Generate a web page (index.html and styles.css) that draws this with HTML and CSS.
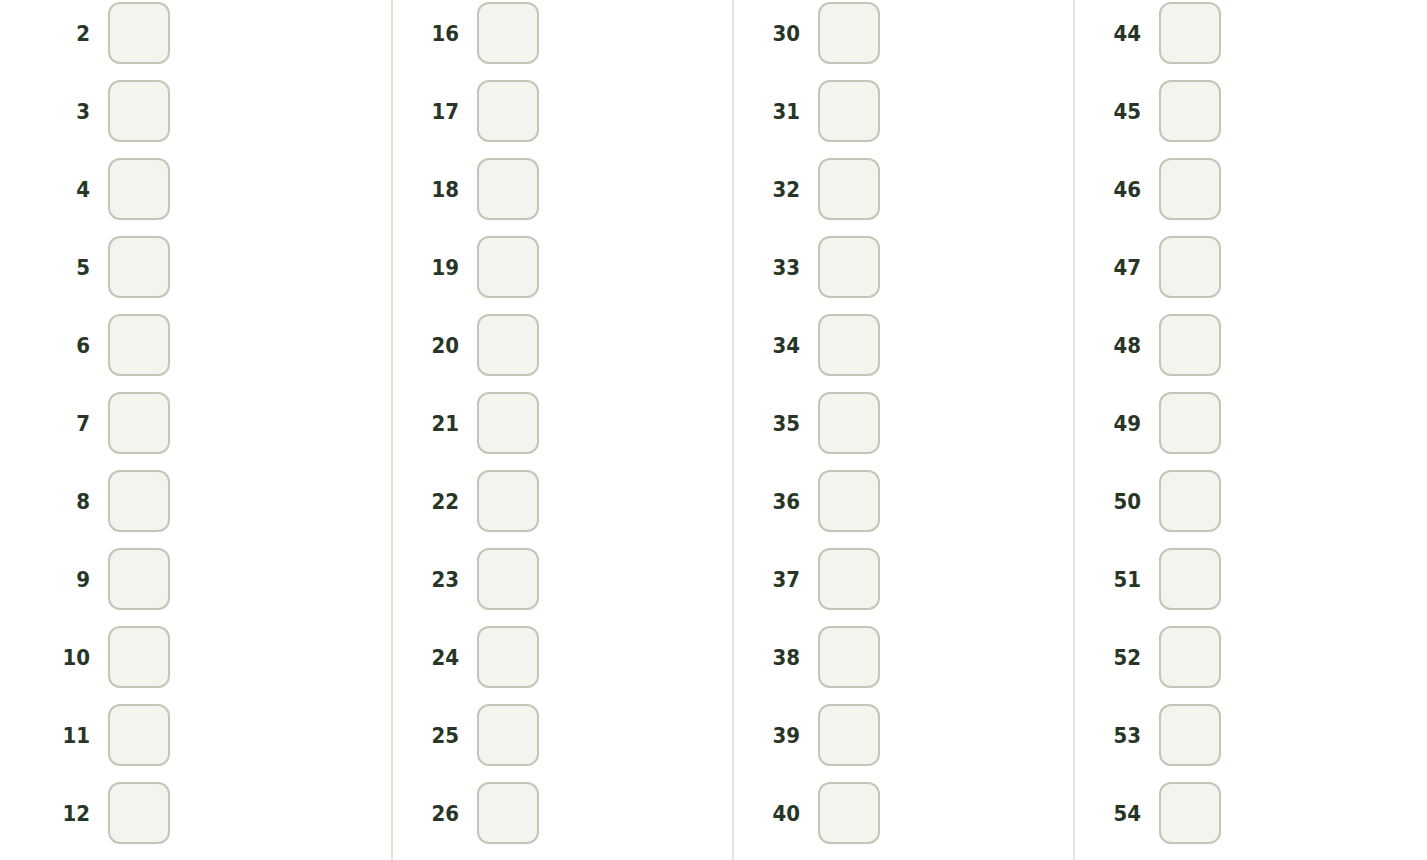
FILE: index.html
```html
<!DOCTYPE html>
<html lang="en">
<head>
  <meta charset="UTF-8">
  <meta name="viewport" content="width=device-width, initial-scale=1.0">
  <title>Answer Sheet</title>
  <link rel="stylesheet" href="styles.css">
</head>
<body>

  <div class="sheet">
    <div class="sheet-column" data-start="2"></div>
    <div class="sheet-column" data-start="16"></div>
    <div class="sheet-column" data-start="30"></div>
    <div class="sheet-column" data-start="44"></div>
  </div>

  <script>
    const rowsPerColumn = 11;

    document.querySelectorAll('.sheet-column').forEach(column => {
      const start = parseInt(column.getAttribute('data-start'), 10);

      for (let i = 0; i < rowsPerColumn; i++) {
        const row = document.createElement('div');
        row.classList.add('answer-row');

        const num = document.createElement('span');
        num.classList.add('answer-number');
        num.innerText = start + i;

        const box = document.createElement('div');
        box.classList.add('answer-box');

        row.appendChild(num);
        row.appendChild(box);
        column.appendChild(row);
      }
    });
  </script>

</body>
</html>
```

FILE: styles.css
```css
body {
  font-family: "DejaVu Sans Condensed", "DejaVu Sans", Arial, sans-serif;
  background-color: #ffffff;
  color: #283627;
  margin: 0;
  overflow: hidden;
}

.sheet {
  display: grid;
  grid-template-columns: 369px 341px 341px 1fr;
  padding-left: 22px;
  height: 860px;
}

.sheet-column {
  display: flex;
  flex-direction: column;
  gap: 16px;
  padding-top: 2px;
  padding-left: 26px;
  border-left: 2px solid #e3e5db;
}

.sheet-column:first-child {
  border-left-color: transparent;
}

.answer-row {
  display: flex;
  align-items: center;
  gap: 18px;
}

.answer-number {
  width: 40px;
  text-align: right;
  font-size: 22px;
  font-weight: bold;
  font-stretch: condensed;
}

.answer-box {
  width: 58px;
  height: 58px;
  background-color: #f4f4ee;
  border: 2px solid #c2c6b6;
  border-radius: 12px;
}
```
